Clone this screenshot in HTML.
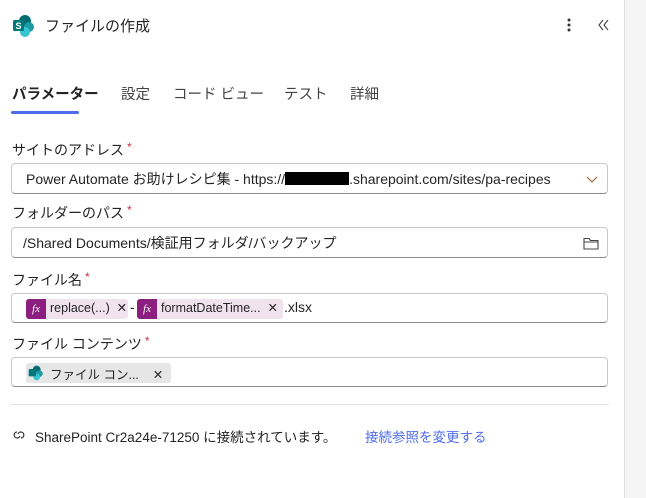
<!DOCTYPE html>
<html><head><meta charset="utf-8"><style>
body{margin:0;width:646px;height:498px;background:#fff;font-family:"Liberation Sans","Noto Sans CJK JP",sans-serif;color:#242424;position:relative;overflow:hidden}
.abs{position:absolute}
.side{left:624px;top:0;width:22px;height:498px;background:#f5f5f5;border-left:1px solid #e0e0e0}
.lbl{left:12px;font-size:14px;color:#242424}
.lbl b{color:#c4314b;font-weight:normal;font-size:12px;margin-left:3px;vertical-align:top}
.box{left:11px;width:597px;height:29px;border:1px solid #c8c8c8;border-bottom-color:#8a8a8a;border-radius:4px;font-size:14px;box-sizing:border-box}
.box .t{position:absolute;left:12px;top:4px;white-space:nowrap}
.tok{position:absolute;top:5px;height:20px;background:#f1e3ee;border-radius:3px;font-size:12.5px;white-space:nowrap}
.tok span{top:1px!important}
.fx{position:absolute;left:0;top:0;width:20px;height:20px;background:#8b1e7e;color:#fff;font-family:"Liberation Serif",serif;font-style:italic;font-size:11px;text-align:center;line-height:20px;border-radius:3px 0 0 3px}
.tab{top:84px;font-size:14.5px;color:#424242}
</style></head><body>
<div class="abs side"></div>
<svg class="abs" style="left:12px;top:14px" width="24" height="24" viewBox="0 0 24 24">
<circle cx="13" cy="7" r="6" fill="#036c70"/><circle cx="17" cy="13" r="5" fill="#1a9ba1"/><circle cx="13" cy="18" r="5" fill="#37c6d0"/>
<rect x="1" y="6" width="11" height="11" rx="1.5" fill="#03787c"/>
<text x="6.5" y="15" font-size="9" fill="#fff" text-anchor="middle" font-family="Liberation Sans" font-weight="bold">S</text></svg>
<div class="abs" style="left:45px;top:15px;font-size:15px;color:#242424">ファイルの作成</div>
<svg class="abs" style="left:565px;top:17px" width="8" height="16"><circle cx="4" cy="3" r="1.5" fill="#333"/><circle cx="4" cy="8" r="1.5" fill="#333"/><circle cx="4" cy="13" r="1.5" fill="#333"/></svg>
<svg class="abs" style="left:597px;top:18px" width="14" height="14"><path d="M6 2L2 7l4 5M11 2L7 7l4 5" stroke="#444" fill="none" stroke-width="1.1"/></svg>
<div class="abs tab" style="left:12px;top:83px;font-weight:bold;color:#242424">パラメーター</div>
<div class="abs" style="left:11px;top:111px;width:68px;height:3px;background:#4f6bed;border-radius:2px"></div>
<div class="abs tab" style="left:121px;top:83px">設定</div>
<div class="abs tab" style="left:173px;top:83px">コード ビュー</div>
<div class="abs tab" style="left:284px;top:83px">テスト</div>
<div class="abs tab" style="left:350px;top:83px">詳細</div>

<div class="abs lbl" style="top:140px">サイトのアドレス<b>*</b></div>
<div class="abs box" style="top:163px;height:31px"><span class="t" style="left:14px;top:5px">Power Automate お助けレシピ集 - https://<span style="display:inline-block;width:64px;height:13px;background:#000;vertical-align:-1px"></span>.sharepoint.com/sites/pa-recipes</span>
<svg class="abs" style="left:574px;top:10px" width="12" height="10"><path d="M1 3l5 5 5-5" stroke="#a05a2c" fill="none" stroke-width="1.1"/></svg></div>
<div class="abs lbl" style="top:203px">フォルダーのパス<b>*</b></div>
<div class="abs box" style="top:227px;height:31px"><span class="t" style="left:11px;top:5px">/Shared Documents/検証用フォルダ/バックアップ</span>
<svg class="abs" style="left:570px;top:7px" width="18" height="16"><path d="M2 3.5h5l1.5 2H16v8.5H2z M2 7h14" stroke="#444" fill="none" stroke-width="1.1" stroke-linejoin="round"/></svg></div>
<div class="abs lbl" style="top:270px">ファイル名<b>*</b></div>
<div class="abs box" style="top:293px;height:30px">
<div class="tok" style="left:14px;width:102px"><div class="fx">fx</div><span style="position:absolute;left:24px">replace(...) &nbsp;✕</span></div>
<span class="abs" style="left:118px;top:5px">-</span>
<div class="tok" style="left:125px;width:146px"><div class="fx">fx</div><span style="position:absolute;left:24px">formatDateTime... &nbsp;✕</span></div>
<span class="abs" style="left:272px;top:5px">.xlsx</span></div>
<div class="abs lbl" style="top:334px">ファイル コンテンツ<b>*</b></div>
<div class="abs box" style="top:357px;height:30px">
<div class="tok" style="left:14px;width:145px;background:#e6e6e6"><svg class="abs" style="left:1px;top:2px" width="18" height="16" viewBox="0 0 24 24"><circle cx="13" cy="7" r="6" fill="#036c70"/><circle cx="17" cy="13" r="5" fill="#1a9ba1"/><circle cx="13" cy="18" r="5" fill="#37c6d0"/><rect x="1" y="6" width="11" height="11" rx="1.5" fill="#03787c"/></svg><span style="position:absolute;left:24px">ファイル コン... &nbsp; &nbsp;✕</span></div></div>
<div class="abs" style="left:11px;top:404px;width:598px;height:1px;background:#e0e0e0"></div>
<svg class="abs" style="left:12px;top:429px" width="14" height="12"><path d="M5 3a3 3 0 1 0 3 4M9 9a3 3 0 1 0-3-4" stroke="#333" fill="none" stroke-width="1.2"/></svg>
<div class="abs" style="left:35px;top:426px;font-size:13.5px;color:#242424">SharePoint Cr2a24e-71250 に接続されています。</div>
<div class="abs" style="left:365px;top:426px;font-size:13.5px;color:#4f6bed">接続参照を変更する</div>
</body></html>
